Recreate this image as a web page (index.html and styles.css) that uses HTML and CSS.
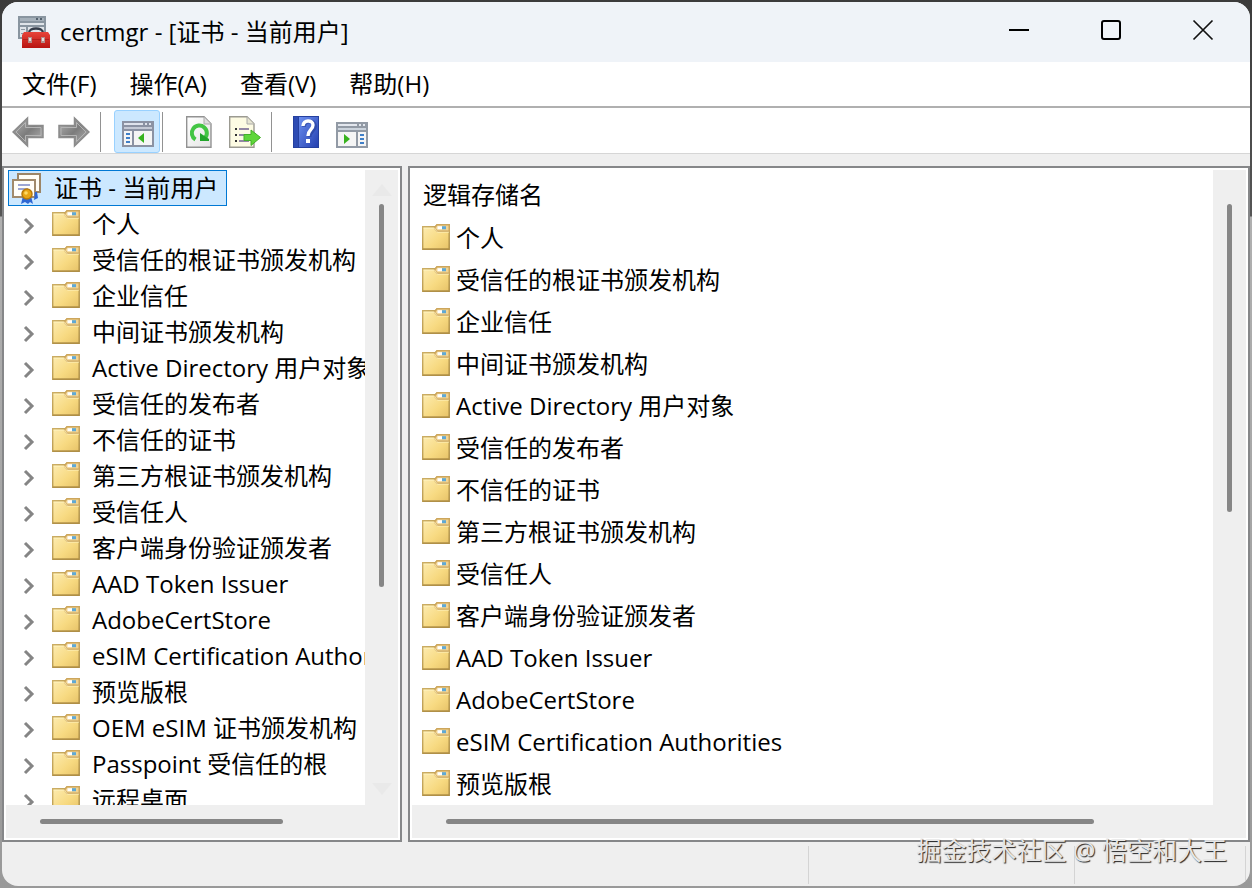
FILE: index.html
```html
<!DOCTYPE html>
<html lang="zh-CN">
<head>
<meta charset="utf-8">
<title>certmgr</title>
<link rel="stylesheet" href="styles.css">
</head>
<body>
<svg class="defs" aria-hidden="true">
  <defs>
    <linearGradient id="g-folder" x1="0" y1="0" x2="1" y2="1"><stop offset="0" stop-color="#fdedb4"/><stop offset="0.6" stop-color="#f7d980"/><stop offset="1" stop-color="#e6c268"/></linearGradient>
    <linearGradient id="g-edge" x1="0" y1="0" x2="1" y2="1"><stop offset="0" stop-color="#cdaf66"/><stop offset="1" stop-color="#a98a40"/></linearGradient>
    <linearGradient id="g-arrow" x1="0" y1="0" x2="1" y2="1"><stop offset="0" stop-color="#b4b4b4"/><stop offset="0.5" stop-color="#7c7c7c"/><stop offset="1" stop-color="#b8b8b8"/></linearGradient>
    <linearGradient id="g-red" x1="0" y1="0" x2="0" y2="1"><stop offset="0" stop-color="#e8443a"/><stop offset="1" stop-color="#b81412"/></linearGradient>
    <linearGradient id="g-help" x1="0" y1="0" x2="1" y2="1"><stop offset="0" stop-color="#6c8ff0"/><stop offset="1" stop-color="#2541b0"/></linearGradient>
    <linearGradient id="g-page" x1="0" y1="0" x2="1" y2="1"><stop offset="0" stop-color="#fff"/><stop offset="1" stop-color="#e4e4e4"/></linearGradient>
    <symbol id="folder" viewBox="0 0 28 26">
      <path d="M.7 2.700h12.500l2-2h12v24.600H.7z" fill="url(#g-folder)" stroke="url(#g-edge)" stroke-width="1.400"/>
      <path d="M1 25.200h26" fill="none" stroke="#b08f48" stroke-width="1.200"/>
      <path d="M12.500 4 15 .8h12.200v6.400H15z" fill="#f1d493" stroke="#cda65c" stroke-width="1.400"/>
      <path d="M15.500 2.200H20v3h-4.500z" fill="#fff"/><path d="M20 2.200h4v3h-4z" fill="#5fa8d4"/>
      <path d="M1.500 4.200h11l3 4H27" fill="none" stroke="#fff3c4" stroke-width="1" opacity=".7"/>
    </symbol>
    <symbol id="chevron" viewBox="0 0 12 18"><path d="M2 2 9 9l-7 7" fill="none" stroke="#858585" stroke-width="3"/></symbol>
  </defs>
</svg>
<div class="window">
  <header class="titlebar">
    <svg class="icon32" viewBox="0 0 32 32" aria-hidden="true">
      <path d="M0 0h28v23H0z" fill="#8995a0"/><path d="M2 2h24v3H2z" fill="#a5b0ba"/><path d="M18 2h2v2h-2zm4 0h2v2h-2z" fill="#53616e"/>
      <path d="M2 7h24v2H2zM2 11h6v10H2zM10 11h16v10H10z" fill="#dfe4e9"/><path d="M3 13h4v1H3zm0 4h4v1H3z" fill="#8b96a0"/>
      <path d="M11 17c0-6 14-6 14 0" fill="none" stroke="#343c49" stroke-width="2.400"/>
      <path d="M6 16h24l2 3v13H4V19z" fill="url(#g-red)"/><path d="M5 23.500h26" stroke="#b5211d"/>
      <path d="M10 21h4v6h-4zm13 0h4v6h-4z" fill="#b58d8a"/><path d="M11 22h2v3h-2zm13 0h2v3h-2z" fill="#e6dede"/>
    </svg>
    <h1 class="caption">certmgr - [证书 - 当前用户]</h1>
    <div class="controls">
      <button class="control" aria-label="最小化"><svg viewBox="0 0 22 22"><path d="M1 11h20" stroke="#000" stroke-width="2"/></svg></button>
      <button class="control" aria-label="最大化"><svg viewBox="0 0 22 22"><rect x="2" y="2" width="18" height="18" rx="2" fill="none" stroke="#000" stroke-width="2"/></svg></button>
      <button class="control" aria-label="关闭"><svg viewBox="0 0 22 22"><path d="m1.500 1.500 19 19m0-19-19 19" stroke="#111" stroke-width="1.700"/></svg></button>
    </div>
  </header>
  <nav class="menubar">
    <button class="menu">文件(F)</button>
    <button class="menu">操作(A)</button>
    <button class="menu">查看(V)</button>
    <button class="menu">帮助(H)</button>
  </nav>
  <div class="toolbar" role="toolbar">
    <button class="tool" aria-label="后退"><svg class="icon32" viewBox="0 0 32 32"><path d="M1 16 15.500 2v7.500H31v12H15.500V30z" fill="url(#g-arrow)" stroke="#8b8b8b" stroke-width="1.500"/><path d="M4 16 13.500 6.500V11.500H29v8H13.500v6z" fill="none" stroke="#b4b4b4" stroke-width="1"/></svg></button>
    <button class="tool" aria-label="前进"><svg class="icon32" viewBox="0 0 32 32"><path d="M31 16 16.500 2v7.500H1v12h15.500V30z" fill="url(#g-arrow)" stroke="#8b8b8b" stroke-width="1.500"/><path d="M28 16 18.500 6.500V11.500H3v8h15.500v6z" fill="none" stroke="#b4b4b4" stroke-width="1"/></svg></button>
    <span class="divider"></span>
    <button class="tool pressed" aria-label="显示/隐藏控制台树" aria-pressed="true"><svg class="icon32" viewBox="0 0 32 32"><path d="M0 5h32v26H0z" fill="#8b92a3"/><path d="M2 7h19v2H2zm21 0h2v2h-2zm4 0h2v2h-2z" fill="#dfe3ec"/><path d="M2 11h28v2H2z" fill="#c5cad6"/><path d="M2 15h8v14H2zm10 0h18v14H12z" fill="#f5f5f5"/><path d="M4 17h4v2H4zm0 4h4v2H4zm0 4h4v2H4z" fill="#3f7fc8"/><path d="m16 22 6-5v10z" fill="#37b21e"/></svg></button>
    <span class="divider near"></span>
    <button class="tool refresh" aria-label="刷新"><svg class="icon32" viewBox="0 0 32 32"><path d="M3.700.7H21l7 7v23.600H3.700z" fill="url(#g-page)" stroke="#929292" stroke-width="1.400"/><path d="M21 1v7h7" fill="#ddd" stroke="#aaa"/><path d="M12.500 23.500A7.500 7.500 0 1 1 21.500 22.500" fill="none" stroke="#43c544" stroke-width="4"/><path d="M17 17v8h9v-2z" fill="#22a52b"/></svg></button>
    <button class="tool" aria-label="导出列表"><svg class="icon32" viewBox="0 0 32 32"><path d="M.7.700H18l7 7v23.600H.7z" fill="#fdfbe3" stroke="#9b9a91" stroke-width="1.400"/><path d="M18 1v7h7" fill="#e7e5d3" stroke="#aaa"/><path d="M6 12h2v2H6zm0 6h2v2H6zm0 6h2v2H6z" fill="#333"/><path d="M10 12h10v2H10zm0 6h10v2H10zm0 6h10v2H10z" fill="#9387a4"/><path d="M15 18.500h7V14l9.500 7.500L22 29.500v-5h-7z" fill="#5fd63a" stroke="#43af29"/></svg></button>
    <span class="divider"></span>
    <button class="tool help" aria-label="帮助"><svg class="icon32" viewBox="0 0 32 32"><path d="M3 0h26v32H3z" fill="#25409f"/><path d="M9 1h19v30H9z" fill="url(#g-help)"/><path d="M4 1h4v30H4z" fill="#2d4bb3"/><path d="M14 11c0-7 11-7 11-1 0 5-5.500 4.500-5.500 11" fill="none" stroke="#203890" stroke-width="4" opacity=".5"/><path d="M13 10c0-6.500 10-6.500 10-1 0 5-5 4.500-5 11" fill="none" stroke="#fff" stroke-width="3.400"/><path d="M16 23h4v4h-4z" fill="#fff"/></svg></button>
    <button class="tool" aria-label="显示/隐藏操作窗格"><svg class="icon32" viewBox="0 0 32 32"><path d="M0 6h32v26H0z" fill="#929aa5"/><path d="M2 8h19v2H2zm21 0h2v2h-2zm4 0h2v2h-2z" fill="#e3e7ee"/><path d="M2 12h28v2H2z" fill="#ccd4dd"/><path d="M2 16h18v14H2zm20 0h8v14h-8z" fill="#f5f5f5"/><path d="M24 18h4v2h-4zm0 4h4v2h-4zm0 4h4v2h-4z" fill="#3f7fc8"/><path d="m14 23-6-5v10z" fill="#37b21e"/></svg></button>
  </div>
  <main class="panes">
    <section class="pane tree-pane">
      <div class="view">
        <div class="root">
          <svg class="icon32" viewBox="0 0 32 32" aria-hidden="true"><path d="M8 2h22v18H8z" fill="#fffdf5" stroke="#9c8566" stroke-width="2"/><path d="M3 8h22v17H3z" fill="#fffefa" stroke="#a18a6c" stroke-width="2"/><path d="M8 13h12M8 17h10" stroke="#9ca5d4" stroke-width="2"/><path d="m13 24-2 8 4-2 3 2 2-2 3 2-2-8zM25 20l-1 8 4-2-1-6z" fill="#2e67d3"/><circle cx="17" cy="22" r="5" fill="#e8a514" stroke="#b97a0a" stroke-width="1.500"/><circle cx="16" cy="21" r="1.800" fill="#ffda63"/></svg>
          <span>证书 - 当前用户</span>
        </div>
        <ul class="tree">
          <li class="node"><button class="expand" aria-label="展开"><svg><use href="#chevron"/></svg></button><svg class="folder"><use href="#folder"/></svg><span>个人</span></li>
          <li class="node"><button class="expand" aria-label="展开"><svg><use href="#chevron"/></svg></button><svg class="folder"><use href="#folder"/></svg><span>受信任的根证书颁发机构</span></li>
          <li class="node"><button class="expand" aria-label="展开"><svg><use href="#chevron"/></svg></button><svg class="folder"><use href="#folder"/></svg><span>企业信任</span></li>
          <li class="node"><button class="expand" aria-label="展开"><svg><use href="#chevron"/></svg></button><svg class="folder"><use href="#folder"/></svg><span>中间证书颁发机构</span></li>
          <li class="node"><button class="expand" aria-label="展开"><svg><use href="#chevron"/></svg></button><svg class="folder"><use href="#folder"/></svg><span>Active Directory 用户对象</span></li>
          <li class="node"><button class="expand" aria-label="展开"><svg><use href="#chevron"/></svg></button><svg class="folder"><use href="#folder"/></svg><span>受信任的发布者</span></li>
          <li class="node"><button class="expand" aria-label="展开"><svg><use href="#chevron"/></svg></button><svg class="folder"><use href="#folder"/></svg><span>不信任的证书</span></li>
          <li class="node"><button class="expand" aria-label="展开"><svg><use href="#chevron"/></svg></button><svg class="folder"><use href="#folder"/></svg><span>第三方根证书颁发机构</span></li>
          <li class="node"><button class="expand" aria-label="展开"><svg><use href="#chevron"/></svg></button><svg class="folder"><use href="#folder"/></svg><span>受信任人</span></li>
          <li class="node"><button class="expand" aria-label="展开"><svg><use href="#chevron"/></svg></button><svg class="folder"><use href="#folder"/></svg><span>客户端身份验证颁发者</span></li>
          <li class="node"><button class="expand" aria-label="展开"><svg><use href="#chevron"/></svg></button><svg class="folder"><use href="#folder"/></svg><span>AAD Token Issuer</span></li>
          <li class="node"><button class="expand" aria-label="展开"><svg><use href="#chevron"/></svg></button><svg class="folder"><use href="#folder"/></svg><span>AdobeCertStore</span></li>
          <li class="node"><button class="expand" aria-label="展开"><svg><use href="#chevron"/></svg></button><svg class="folder"><use href="#folder"/></svg><span>eSIM Certification Authorities</span></li>
          <li class="node"><button class="expand" aria-label="展开"><svg><use href="#chevron"/></svg></button><svg class="folder"><use href="#folder"/></svg><span>预览版根</span></li>
          <li class="node"><button class="expand" aria-label="展开"><svg><use href="#chevron"/></svg></button><svg class="folder"><use href="#folder"/></svg><span>OEM eSIM 证书颁发机构</span></li>
          <li class="node"><button class="expand" aria-label="展开"><svg><use href="#chevron"/></svg></button><svg class="folder"><use href="#folder"/></svg><span>Passpoint 受信任的根</span></li>
          <li class="node"><button class="expand" aria-label="展开"><svg><use href="#chevron"/></svg></button><svg class="folder"><use href="#folder"/></svg><span>远程桌面</span></li>
        </ul>
      </div>
      <div class="vscroll"><span class="arrow up"></span><div class="vtrack"><div class="thumb tree-v"></div></div><span class="arrow down"></span></div>
      <div class="hscroll"><div class="thumb tree-h"></div></div>
    </section>
    <section class="pane list-pane">
      <div class="view">
        <table class="list">
          <thead><tr><th>逻辑存储名</th></tr></thead>
          <tbody>
            <tr><td><div class="entry"><svg class="folder"><use href="#folder"/></svg><span>个人</span></div></td></tr>
            <tr><td><div class="entry"><svg class="folder"><use href="#folder"/></svg><span>受信任的根证书颁发机构</span></div></td></tr>
            <tr><td><div class="entry"><svg class="folder"><use href="#folder"/></svg><span>企业信任</span></div></td></tr>
            <tr><td><div class="entry"><svg class="folder"><use href="#folder"/></svg><span>中间证书颁发机构</span></div></td></tr>
            <tr><td><div class="entry"><svg class="folder"><use href="#folder"/></svg><span>Active Directory 用户对象</span></div></td></tr>
            <tr><td><div class="entry"><svg class="folder"><use href="#folder"/></svg><span>受信任的发布者</span></div></td></tr>
            <tr><td><div class="entry"><svg class="folder"><use href="#folder"/></svg><span>不信任的证书</span></div></td></tr>
            <tr><td><div class="entry"><svg class="folder"><use href="#folder"/></svg><span>第三方根证书颁发机构</span></div></td></tr>
            <tr><td><div class="entry"><svg class="folder"><use href="#folder"/></svg><span>受信任人</span></div></td></tr>
            <tr><td><div class="entry"><svg class="folder"><use href="#folder"/></svg><span>客户端身份验证颁发者</span></div></td></tr>
            <tr><td><div class="entry"><svg class="folder"><use href="#folder"/></svg><span>AAD Token Issuer</span></div></td></tr>
            <tr><td><div class="entry"><svg class="folder"><use href="#folder"/></svg><span>AdobeCertStore</span></div></td></tr>
            <tr><td><div class="entry"><svg class="folder"><use href="#folder"/></svg><span>eSIM Certification Authorities</span></div></td></tr>
            <tr><td><div class="entry"><svg class="folder"><use href="#folder"/></svg><span>预览版根</span></div></td></tr>
          </tbody>
        </table>
      </div>
      <div class="vscroll"><div class="vtrack open"><div class="thumb list-v"></div></div></div>
      <div class="hscroll"><div class="thumb list-h"></div></div>
    </section>
  </main>
  <footer class="status"><span class="cell main"></span><span class="cell second"></span><span class="cell third"></span></footer>
  <div class="watermark">掘金技术社区 @ 悟空和大王</div>
</div>
</body>
</html>
```

FILE: styles.css
```css
* { box-sizing: border-box; }

body {
  margin: 0;
  height: 100vh;
  padding: 2px;
  overflow: hidden;
  background: linear-gradient(#3b3b3b 0, #565656 216px, #b0b0b0 217px, #999 100%);
  color: #000;
  font: 400 24px/36px "Open Sans", "Noto Sans CJK SC", sans-serif;
}

button {
  margin: 0;
  padding: 0;
  border: 0;
  background: none;
  color: inherit;
  font: inherit;
}

svg { display: block; flex: none; }
.defs { position: absolute; width: 0; height: 0; }
.icon32 { width: 32px; height: 32px; }
.folder { width: 28px; height: 26px; }

.window {
  position: relative;
  display: flex;
  flex-direction: column;
  height: 100%;
  border-radius: 16px;
  overflow: hidden;
  background: #efefef;
}

.titlebar {
  display: flex;
  align-items: center;
  height: 60px;
  flex: none;
  padding-left: 16px;
  gap: 10px;
  background: #eff3f8;
}
.caption { margin: 0; flex: 1; font-size: 24px; font-weight: inherit; white-space: nowrap; }
.controls { display: flex; height: 100%; padding-right: 1px; }
.control { display: grid; place-items: center; width: 92px; padding-bottom: 4px; }
.control svg { width: 22px; height: 22px; }

.menubar {
  display: flex;
  gap: 33px;
  flex: none;
  height: 46px;
  padding-left: 20px;
  border-bottom: 2px solid #b0b0b0;
  background: #fff;
}

.toolbar {
  display: flex;
  align-items: center;
  flex: none;
  height: 46px;
  padding: 2px 0 0 10px;
  gap: 14px;
  border-bottom: 1px solid #d6d6d6;
  background: #fff;
}
.tool { display: grid; place-items: center; }
.divider { width: 1px; height: 40px; margin: 0 -4px; background: #929292; }
.toolbar .divider.near { margin-left: -12px; }
.pressed { width: 46px; height: 43px; margin-left: 3px; padding-left: 2px; border: 1px solid #99d1ff; border-radius: 3px; background: #cce8ff; }
.refresh { margin-left: 10px; }
.help { margin-left: 8px; }

.panes {
  display: grid;
  grid-template-columns: minmax(0, 400px) minmax(0, 1fr);
  gap: 6px;
  flex: 1;
  min-height: 0;
  padding-top: 12px;
}
.pane {
  display: grid;
  grid-template-columns: minmax(0, 1fr) 33px;
  grid-template-rows: minmax(0, 1fr) 33px;
  min-height: 0;
  padding: 2px;
  border: 2px solid #868789;
  background: #fff;
}
.view { overflow: hidden; background: #fff; white-space: nowrap; }

.root {
  display: flex;
  align-items: center;
  gap: 12px;
  width: fit-content;
  height: 36px;
  margin-left: 2px;
  padding: 0 8px 0 1px;
  border: 1px solid #0078d4;
  background: #cce8ff;
}
.tree { margin: 0; padding: 0 0 0 17px; list-style: none; }
.node { display: flex; align-items: center; height: 36px; }
.expand { flex: none; width: 29px; padding-top: 3px; }
.expand svg { width: 12px; height: 18px; }
.node .folder { margin: 0 12px 2px 0; }

.vscroll { display: flex; flex-direction: column; align-items: center; background: #efefef; }
.vtrack { flex: 1; padding: 8px 0; }
.vtrack.open { padding-top: 34px; }
.thumb { border-radius: 3px; background: #868686; }
.tree-v { width: 5px; height: 67%; }
.list-v { width: 5px; height: 52%; }
.arrow { width: 0; margin-top: 14px; border: 10px solid transparent; border-top-width: 0; border-bottom: 12px solid #e9e9e9; }
.arrow.down { margin: 0 0 10px; border-top: 12px solid #e9e9e9; border-bottom-width: 0; }
.hscroll { grid-column: 1 / -1; display: flex; align-items: center; padding-left: 34px; background: #efefef; }
.tree-h { width: 68%; height: 5px; }
.list-h { width: 81%; height: 5px; }

.list { border-collapse: collapse; }
.list th { height: 47px; padding: 2px 0 0 11px; font-weight: inherit; text-align: left; }
.list td { height: 42px; padding: 0 0 0 10px; }
.entry { display: flex; align-items: center; gap: 6px; }
.list .folder { margin-bottom: 2px; }

.status { display: flex; flex: none; height: 44px; padding: 4px 4px 2px 0; }
.cell { border-right: 1px solid #d4d4d4; }
.cell.main { flex: 808; }
.cell.second { flex: 266; }
.cell.third { flex: 170; }

.watermark {
  position: absolute;
  right: 23px;
  bottom: 18px;
  color: #e6e6e6;
  font-size: 25px;
  text-shadow: 1px 1px 1px #222;
}
```
